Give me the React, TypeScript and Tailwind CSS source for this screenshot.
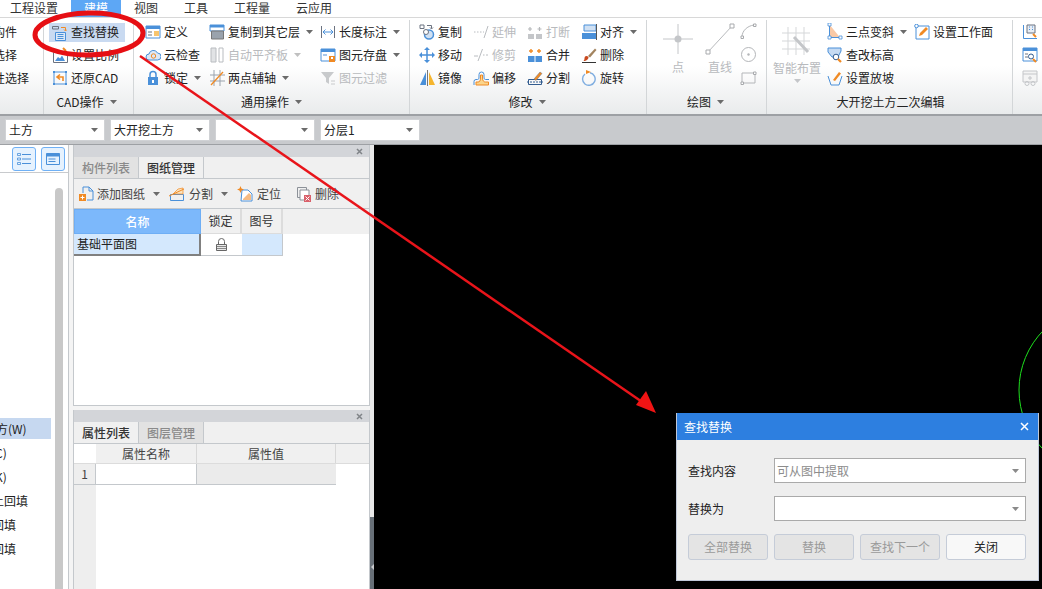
import React from "react";

const B = "#4a90d9";
const O = "#f08a24";
const G = "#b9bcc0";
const D = "#6b7280";

function S({ children, w = 16, h = 16 }: { children: React.ReactNode; w?: number; h?: number }) {
  return (
    <svg width={w} height={h} viewBox={`0 0 ${w} ${h}`} fill="none" className="shrink-0">
      {children}
    </svg>
  );
}

const I: Record<string, React.ReactNode> = {
  find: (
    <S>
      <path d="M1.500 1.500h6v2.500h-6z" stroke={D} />
      <path d="M10 2.500h4.500v3M13 4.500l1.500 1.500L16 4.500" stroke={O} />
      <path d="M4.500 7.500h10v8h-10z" fill="#dbe8f7" stroke={B} />
      <path d="M6.500 9.500h6M6.500 11.500h6M6.500 13.500h6" stroke={B} />
    </S>
  ),
  scale: (
    <S>
      <path d="M1.500 5.500h14v10h-14z" fill="#fff" stroke={D} />
      <path d="M3 14l3-4 2 1.500 2-3 3 5.500z" fill={B} />
      <path d="M11 1l3 3" stroke={O} strokeWidth="2" />
    </S>
  ),
  restore: (
    <S>
      <path d="M2 2h12v12H2z" stroke={B} />
      <path d="M1 1h2v2H1zM13 1h2v2h-2zM1 13h2v2H1zM13 13h2v2h-2z" fill={B} />
      <path d="M11 11V7H6M8 4.500L5 7l3 2.500" stroke={O} strokeWidth="1.600" />
    </S>
  ),
  def: (
    <S>
      <path d="M1 2h14v12H1z" fill="#fff" stroke={B} />
      <path d="M1 2h14v3H1z" fill={B} />
      <path d="M3 8h4M3 11h4" stroke={D} />
      <path d="M9 7h5v5H9z" fill="#f7c56f" />
    </S>
  ),
  cloud: (
    <S>
      <path d="M4 13a3 3 0 010-6 4.500 4.500 0 018.500-1A3.500 3.500 0 0112.500 13z" fill="#dce8f6" stroke={B} />
      <circle cx="8.500" cy="9" r="2.200" stroke={O} />
    </S>
  ),
  lock: (
    <S>
      <path d="M5 7V4.500a3 3 0 016 0V7" stroke={B} strokeWidth="1.500" />
      <path d="M3 7h10v8H3z" fill={B} />
      <path d="M7 10h2v3H7z" fill="#fff" />
    </S>
  ),
  copyLayer: (
    <S>
      <path d="M1 1h14v6H1z" fill="#fff" stroke={B} />
      <path d="M1 1h14v2.500H1z" fill={B} />
      <path d="M2.500 7h12v8h-12z" fill="#9aa3ad" stroke="#777" />
    </S>
  ),
  align: (
    <S>
      <path d="M2 1h5v14H2z" fill="#e1e3e5" stroke={G} />
      <path d="M10 1h4v14h-4z" fill="#fff" stroke={G} />
    </S>
  ),
  twoPoint: (
    <S>
      <path d="M1 5h15M1 11h15M5 0v16M11 0v16" stroke="#9aa3ad" />
      <path d="M2 15L14 2" stroke={O} strokeWidth="1.300" />
    </S>
  ),
  len: (
    <S>
      <path d="M1.500 2v12M14.500 2v12" stroke={D} />
      <path d="M3 8h10M5.500 5.500L3 8l2.500 2.500M10.500 5.500L13 8l-2.500 2.500" stroke={B} />
    </S>
  ),
  save: (
    <S>
      <path d="M1 2h14v12H1z" fill="#fff" stroke={B} />
      <path d="M1 2h14v3H1z" fill={B} />
      <path d="M3 7h4v2H3z" fill="#a9c8ea" />
      <path d="M9 9h6v6H9z" fill={O} />
      <path d="M11 10h2v2h-2z" fill="#fff" />
    </S>
  ),
  filter: (
    <S>
      <path d="M1 2h13L9 8v6l-3-2V8z" fill="#c8cacc" />
      <path d="M11 11h4M11 14h4" stroke="#c8cacc" />
    </S>
  ),
  copy: (
    <S>
      <path d="M1 1h4v3.500H1z" stroke={D} />
      <path d="M8 1.500h4.500v3M11 3.500l1.500 1.500L14 3.500" stroke={D} />
      <circle cx="10" cy="10.500" r="4.500" fill="#cfe0f3" stroke={B} strokeWidth="1.500" />
      <circle cx="7" cy="8" r="2.500" fill="#fff" stroke={D} />
    </S>
  ),
  move: (
    <S>
      <path d="M8 2v12M2 8h12" stroke={B} strokeWidth="1.500" />
      <path d="M8 0l3 3H5zM8 16l3-3H5zM0 8l3-3v6zM16 8l-3-3v6z" fill={B} />
    </S>
  ),
  mirror: (
    <S>
      <path d="M7 2v13H1z" fill={B} />
      <path d="M8.500 0v16" stroke="#777" />
      <path d="M10 2v13h6z" fill="#f5b52e" />
    </S>
  ),
  extend: (
    <S>
      <path d="M1 8h1.500M4 8h1.500M7 8h1.500" stroke={G} />
      <path d="M10 8h1M15 2l-4 12" stroke={G} />
    </S>
  ),
  trim: (
    <S>
      <path d="M1 9h4M10 8h1.500M13 8h2M9.500 2L5 14" stroke={G} />
    </S>
  ),
  offset: (
    <S>
      <path d="M1 15V11.500A2 2 0 013 9.500h1.500C5.500 9.500 6 9 6 7V4.500a2.500 2.500 0 015 0V7c0 2 .5 2.500 1.500 2.500H16" stroke={B} />
      <path d="M3 15h12.500V12H12.500C11 12 9.500 11 9.500 8V5H7.500v3c0 3-1 4-2.500 4H3z" fill="#fbd58c" stroke={O} />
    </S>
  ),
  break: (
    <S>
      <path d="M1 10h6v5H1zM9 10h6v5H9z" fill="#c4c6c9" />
      <path d="M3 3v4M1 5h4M12.500 3v4M10.500 5h4" stroke="#b5b7ba" strokeWidth="1.200" />
    </S>
  ),
  merge: (
    <S>
      <path d="M1 9h14v6H1z" fill={B} />
      <path d="M8 9v6" stroke="#fff" />
      <path d="M4 2v4M2 4h4M12 2v4M10 4h4" stroke={O} strokeWidth="1.400" />
    </S>
  ),
  split: (
    <S>
      <path d="M1.500 9.500h13v5h-13z" stroke="#335c8f" />
      <path d="M0 12h16" stroke="#335c8f" strokeDasharray="2 1" />
      <path d="M7 9l6-7 2 1.500L9 10.500z" fill={O} stroke={D} strokeWidth=".5" />
    </S>
  ),
  alignTop: (
    <S>
      <path d="M1 9h14v6H1z" fill={B} />
      <path d="M3 1h12v6H3z" fill="#cfe0f3" stroke={B} />
      <path d="M15.500 0v16" stroke="#555" />
    </S>
  ),
  del: (
    <S>
      <path d="M1 15.500h14" stroke="#333" />
      <path d="M7 9L14 1.500 15.500 3 9 10.500z" fill="#a3845f" />
      <path d="M4 9.500c2-1.500 4 .5 3.500 1.500C6.500 13.500 4 14 2.500 14c1.500-1 .5-3 1.500-4.500z" fill="#c9491f" />
    </S>
  ),
  rotate: (
    <S>
      <path d="M9 2.800a6.300 6.300 0 11-5 1.200" stroke="#80aee0" strokeWidth="1.400" />
      <path d="M5 0l5 2-5 2z" fill={O} />
    </S>
  ),
  slope: (
    <S h={17}>
      <path d="M2.500 1.500v13h10.500z" fill="#f9c9a6" />
      <path d="M2.500 2v12.500H13" stroke={B} />
      <path d="M1 0h3v3H1zM1 13h3v3H1zM12 13h3v3h-3z" fill="#fff" stroke={B} strokeWidth=".8" />
    </S>
  ),
  elev: (
    <S>
      <path d="M1 1h13v3l-3 6H5L1 5z" fill="#c6dbf3" stroke={B} />
      <circle cx="9" cy="10" r="2.800" fill="#fff" stroke="#335c8f" />
      <path d="M11 12l3 3" stroke={O} strokeWidth="2.200" />
    </S>
  ),
  slopeSet: (
    <S>
      <path d="M1 6l3 9h8l3-9" stroke={B} />
      <path d="M6 10l6-8 2 1.500-6 7.500z" fill={O} />
    </S>
  ),
  plane: (
    <S>
      <path d="M2 2h13v13H2z" fill="#fff" stroke={B} />
      <circle cx="2.500" cy="2" r="1.800" fill="#fff" stroke={B} />
      <path d="M5 12l1-3 6-6 2 2-6 6z" fill={O} />
    </S>
  ),
  r1: (
    <S>
      <path d="M1.500 1v13.500H15" stroke={B} />
      <path d="M5 1h8v8H5z" fill="#e8eef6" stroke={D} />
      <path d="M7 3h1M10 3h1M7 5.500h1M10 5.500h1" stroke={B} />
      <path d="M11 10l3 3" stroke={O} strokeWidth="2" />
    </S>
  ),
  r2: (
    <S>
      <path d="M1 1h14v13H1z" fill="#fff" stroke={B} />
      <path d="M1 1h14v3H1z" fill={B} />
      <circle cx="9" cy="9.500" r="2.500" stroke="#335c8f" />
      <path d="M3 7h3M3 10h3" stroke={D} />
      <path d="M11 12l3 3" stroke={O} strokeWidth="2" />
    </S>
  ),
  r3: (
    <S>
      <path d="M1 1h14v11H1z" fill="#f4f4f4" stroke="#c4c6c9" />
      <path d="M1 4h14M6 8h4M8 6v4" stroke="#c4c6c9" />
      <circle cx="5" cy="13.500" r="2" stroke="#c4c6c9" />
      <circle cx="11" cy="13.500" r="2" stroke="#c4c6c9" />
    </S>
  ),
  addDrawing: (
    <S>
      <path d="M5 1h6l4 4v9H9" stroke={B} />
      <path d="M11 1v4h4M5 1v6" stroke={B} />
      <path d="M1 8h7v7H1z" fill={O} />
      <path d="M4.500 9.500v4M2.500 11.500h4" stroke="#fff" />
    </S>
  ),
  splitD: (
    <S>
      <path d="M1.500 8.500h13v6h-13z" stroke={B} />
      <path d="M4 8l5-5 5-1v6z" fill="#fbe3bf" stroke={O} strokeWidth=".7" />
      <path d="M0 10l15-7" stroke={O} />
    </S>
  ),
  locate: (
    <S>
      <path d="M5 4h6l4 4v7H4z" fill="#fff" stroke={B} />
      <path d="M6 13l6-6 2 2v5H6z" fill="#f7bb83" />
      <path d="M3.500 0l1 2.500 2.500 1-2.500 1-1 2.500-1-2.500L0 3.500l2.500-1z" fill={O} />
    </S>
  ),
  remove: (
    <S>
      <path d="M1.500 1.500h9v10h-9z" stroke="#8c9198" />
      <path d="M4 4h9v10H4z" fill="#fff" stroke="#8c9198" />
      <path d="M8 9h7v7H8z" fill="#d9606a" />
      <path d="M9.500 10.500l4 4M13.500 10.500l-4 4" stroke="#fff" />
    </S>
  ),
};

function Caret({ c = "#6b6b6b" }: { c?: string }) {
  return (
    <svg width="7" height="4" viewBox="0 0 7 4" className="shrink-0">
      <path d="M0 0h7L3.500 4z" fill={c} />
    </svg>
  );
}

function Item({ icon, label, caret, off }: { icon?: string; label: string; caret?: boolean; off?: boolean }) {
  return (
    <div className={`flex h-[23px] items-center whitespace-nowrap ${off ? "text-[#b8babd]" : "text-[#222222]"}`}>
      {icon && <span className="mr-[3px] flex w-[16px] justify-center">{I[icon]}</span>}
      <span>{label}</span>
      {caret && (
        <span className="ml-[6px]">
          <Caret c={off ? "#c0c0c0" : "#6b6b6b"} />
        </span>
      )}
    </div>
  );
}

function Group({ width, label, caret, children, last, labelClass = "" }: { width: string; label?: string; caret?: boolean; children: React.ReactNode; last?: boolean; labelClass?: string }) {
  return (
    <div className={`relative flex h-full shrink-0 flex-col overflow-hidden ${width} ${last ? "" : "border-r border-[#d3d6d8]"}`}>
      <div className="flex h-[69px] shrink-0">{children}</div>
      <div className={`flex h-[26px] items-center justify-center gap-[6px] whitespace-nowrap text-[#222222] ${labelClass}`}>
        {label}
        {caret && <Caret />}
      </div>
    </div>
  );
}

function ToolSelect({ value }: { value: string }) {
  return (
    <div className="flex h-[22px] w-[100px] items-center justify-between border border-[#d0d2d5] bg-white pl-[3px] pr-[6px] text-[#222]">
      <span>{value}</span>
      <Caret />
    </div>
  );
}

function Tab({ label, active }: { label: string; active?: boolean }) {
  return (
    <div
      className={`flex h-[21px] w-[65px] items-center justify-center border-r border-[#c4c8cc] ${
        active ? "bg-[#f0f0f0] font-medium text-[#333]" : "bg-[#e2e2e2] font-medium text-[#8a8a8a]"
      }`}
    >
      {label}
    </div>
  );
}

function PanelHead() {
  return (
    <div className="flex h-[12px] shrink-0 items-center justify-end bg-[#d3d5d9] pr-[6px]">
      <svg width="7" height="7" viewBox="0 0 7 7">
        <path d="M1 1l5 5M6 1L1 6" stroke="#808488" strokeWidth="1.500" />
      </svg>
    </div>
  );
}

function DialogSelect({ value }: { value?: string }) {
  return (
    <div className="flex h-[25px] w-[252px] items-center justify-between border border-[#aaaaaa] bg-white pl-[2px] pr-[6px] text-[#8c8c8c]">
      <span>{value}</span>
      <Caret c="#8a8a8a" />
    </div>
  );
}

function DialogBtn({ label, off }: { label: string; off?: boolean }) {
  return (
    <div
      className={`flex h-[26px] w-[80px] items-center justify-center rounded-[3px] border border-[#c5ccd8] ${
        off ? "bg-[#e4e4e4] text-[#9a9a9a]" : "bg-[#f8f8f8] text-[#222]"
      }`}
    >
      {label}
    </div>
  );
}

function TreeRow({ label, sel, shift }: { label: string; sel?: boolean; shift: string }) {
  return (
    <div className={`mb-[3px] flex h-[21px] w-[51px] items-center overflow-hidden whitespace-nowrap text-[#222] ${sel ? "bg-[#c6d8f0]" : ""}`}>
      <span className={shift}>{label}</span>
    </div>
  );
}

export default function App() {
  return (
    <div className="relative flex h-[589px] w-[1042px] flex-col overflow-hidden bg-white font-['Noto_Sans_CJK_SC',sans-serif] text-[12px] leading-none">
      {/* menu tabs */}
      <div className="flex h-[18px] shrink-0 items-center border-b border-[#d8d8d8] bg-white pb-[1px] pl-[10px] text-[#333]">
        <span className="w-[61px]">工程设置</span>
        <span className="flex h-[17px] w-[50px] items-center justify-center bg-[#5da7f5] text-white">建模</span>
        <span className="ml-[13px] w-[50px]">视图</span>
        <span className="w-[50px]">工具</span>
        <span className="w-[62px]">工程量</span>
        <span>云应用</span>
      </div>

      {/* ribbon */}
      <div className="flex h-[98px] shrink-0 border-b-2 border-[#9da0a4] bg-gradient-to-b from-white from-50% to-[#e9ebec] pt-[2px]">
        <Group width="w-[44px]">
          <div className="-ml-[7px]">
            <Item label="构件" />
            <Item label="选择" />
            <Item label="性选择" />
          </div>
        </Group>
        <Group width="w-[90px]" label="CAD操作" caret labelClass="pr-[4px]">
          <div className="ml-[5px]">
            <div className="flex h-[23px] items-start pt-[3px]">
              <div className="flex h-[19px] w-[76px] items-center bg-[#c9daf1] pl-[2px]">
                <span className="mr-[4px] flex w-[16px] justify-center">{I.find}</span>
                <span className="-mt-[2px] text-[#222]">查找替换</span>
              </div>
            </div>
            <div className="pl-[3px]">
              <Item icon="scale" label="设置比例" />
              <Item icon="restore" label="还原CAD" />
            </div>
          </div>
        </Group>
        <Group width="w-[276px]" label="通用操作" caret>
          <div className="ml-[11px] w-[64px]">
            <Item icon="def" label="定义" />
            <Item icon="cloud" label="云检查" />
            <Item icon="lock" label="锁定" caret />
          </div>
          <div className="w-[111px]">
            <Item icon="copyLayer" label="复制到其它层" caret />
            <Item icon="align" label="自动平齐板" caret off />
            <Item icon="twoPoint" label="两点辅轴" caret />
          </div>
          <div>
            <Item icon="len" label="长度标注" caret />
            <Item icon="save" label="图元存盘" caret />
            <Item icon="filter" label="图元过滤" off />
          </div>
        </Group>
        <Group width="w-[237px]" label="修改" caret labelClass="pr-[2px]">
          <div className="ml-[9px] w-[54px]">
            <Item icon="copy" label="复制" />
            <Item icon="move" label="移动" />
            <Item icon="mirror" label="镜像" />
          </div>
          <div className="w-[54px]">
            <Item icon="extend" label="延伸" off />
            <Item icon="trim" label="修剪" off />
            <Item icon="offset" label="偏移" />
          </div>
          <div className="w-[54px]">
            <Item icon="break" label="打断" off />
            <Item icon="merge" label="合并" />
            <Item icon="split" label="分割" />
          </div>
          <div>
            <Item icon="alignTop" label="对齐" caret />
            <Item icon="del" label="删除" />
            <Item icon="rotate" label="旋转" />
          </div>
        </Group>
        <Group width="w-[120px]" label="绘图" caret labelClass="pr-[2px]">
          <div className="ml-[10px] flex w-[42px] flex-col items-center pt-[3px] text-[#b8babd]">
            <svg width="30" height="32" viewBox="0 0 30 32">
              <path d="M15 1v12M15 19v12M0 16h12M18 16h12" stroke="#c4c6c9" />
              <circle cx="15" cy="16" r="3.500" fill="#c4c6c9" />
            </svg>
            <span className="mt-[6px]">点</span>
          </div>
          <div className="flex w-[42px] flex-col items-center pt-[3px] text-[#b8babd]">
            <svg width="30" height="32" viewBox="0 0 30 32">
              <path d="M3 29L27 3" stroke="#b8babd" />
              <path d="M1 27h4v4H1zM25 1h4v4h-4z" fill="#fff" stroke="#a8aaad" />
            </svg>
            <span className="mt-[6px]">直线</span>
          </div>
          <div className="-ml-[3px] flex w-[20px] flex-col items-center">
            {[
              <g key="a">
                <path d="M2 14C2 8 7 3 14 2" stroke="#b4b6b9" />
                <path d="M1 13h2.500v2.500H1zM13.500 1H16v2.500h-2.500z" stroke="#a8aaad" fill="#fff" />
              </g>,
              <g key="b">
                <circle cx="8.500" cy="8.500" r="7" stroke="#b4b6b9" />
                <circle cx="8.500" cy="8.500" r="1.200" fill="#b4b6b9" />
              </g>,
              <g key="c">
                <path d="M2 4h13v10H2z" stroke="#b4b6b9" />
                <path d="M1 13h2.500v2.500H1zM13.500 3H16v2.500h-2.500z" stroke="#a8aaad" fill="#fff" />
              </g>,
            ].map((p, i) => (
              <div key={i} className="flex h-[23px] items-center">
                <svg width="17" height="17" viewBox="0 0 17 17" fill="none">{p}</svg>
              </div>
            ))}
          </div>
        </Group>
        <Group width="w-[246px]" label="大开挖土方二次编辑" labelClass="pl-[2px]">
          <div className="ml-[6px] flex w-[54px] flex-col items-start pt-[7px] text-[#b8babd]">
            <div className="ml-[9px]">
              <svg width="30" height="30" viewBox="0 0 30 30" fill="none">
                <path d="M0 6h28M0 14h28M0 22h28M6 0v28M14 0v28M22 0v28" stroke="#d5d7d9" />
                <path d="M12 10l14 15" stroke="#c4c6c9" strokeWidth="3" />
              </svg>
            </div>
            <span className="mt-[5px]">智能布置</span>
            <span className="ml-[21px] mt-[5px]"><Caret c="#c4c6c9" /></span>
          </div>
          <div className="w-[87px]">
            <Item icon="slope" label="三点变斜" caret />
            <Item icon="elev" label="查改标高" />
            <Item icon="slopeSet" label="设置放坡" />
          </div>
          <div>
            <Item icon="plane" label="设置工作面" />
          </div>
        </Group>
        <Group width="w-[30px]" last>
          <div className="ml-[9px] w-[40px]">
            <Item icon="r1" label="" />
            <Item icon="r2" label="" />
            <Item icon="r3" label="" />
          </div>
        </Group>
      </div>

      {/* selector bar */}
      <div className="flex h-[29px] shrink-0 items-center gap-[5px] border-b border-[#9da0a4] bg-[#c8cacd] pb-[1px] pl-[5px]">
        <ToolSelect value="土方" />
        <ToolSelect value="大开挖土方" />
        <ToolSelect value="" />
        <ToolSelect value="分层1" />
      </div>

      {/* main */}
      <div className="flex min-h-0 flex-1">
        {/* tree */}
        <div className="flex w-[69px] shrink-0 flex-col border-r border-[#c4c8cc] bg-white">
          <div className="flex h-[28px] shrink-0 items-center gap-[5px] border-b border-[#c8cacd] pl-[12px]">
            <div className="flex h-[24px] w-[24px] items-center justify-center rounded-[3px] border border-[#6fb0f5] bg-[#e6f2fe]">
              <svg width="14" height="12" viewBox="0 0 14 12" fill="none">
                <path d="M.500.500h3v2H.500zM.500 5h3v2H.500zM.500 9.500h3v2H.500z" stroke="#4a90d9" strokeWidth=".8" />
                <path d="M5 1.500h9M5 6h9M5 10.500h9" stroke="#4a90d9" />
              </svg>
            </div>
            <div className="flex h-[24px] w-[24px] items-center justify-center rounded-[3px] border border-[#6fb0f5] bg-[#e6f2fe]">
              <svg width="14" height="12" viewBox="0 0 14 12" fill="none">
                <path d="M.500.500h13v11H.500z" stroke="#4a90d9" />
                <path d="M.500.500h13v3H.500z" fill="#4a90d9" />
                <path d="M2.500 6h7M2.500 8.500h7" stroke="#4a90d9" />
              </svg>
            </div>
          </div>
          <div className="relative min-h-0 flex-1">
            <div className="absolute bottom-0 left-[55px] top-[15px] w-[8px] rounded-t-[4px] bg-[#c8c8c8]" />
            <div className="pt-[245px]">
              <TreeRow label="方(W)" sel shift="-ml-[4px]" />
              <TreeRow label="C)" shift="-ml-[5px]" />
              <TreeRow label="K)" shift="-ml-[5px]" />
              <TreeRow label="土回填" shift="-ml-[8px]" />
              <TreeRow label="回填" shift="-ml-[8px]" />
              <TreeRow label="回填" shift="-ml-[8px]" />
            </div>
          </div>
        </div>

        {/* middle */}
        <div className="flex w-[301px] shrink-0 flex-col gap-[4px] bg-[#f4f4f4] pl-[4px]">
          <div className="flex h-[261px] shrink-0 flex-col border-x border-b border-[#c4c8cc] bg-white">
            <PanelHead />
            <div className="flex h-[22px] shrink-0 border-b border-[#c4c8cc] bg-[#f0f0f0]">
              <Tab label="构件列表" />
              <Tab label="图纸管理" active />
            </div>
            <div className="flex h-[30px] shrink-0 items-center border-b border-[#c4c8cc] bg-[#f0f0f0] pl-[4px] text-[#444]">
              <span className="mr-[3px]">{I.addDrawing}</span>
              添加图纸
              <span className="ml-[8px] mr-[9px]"><Caret /></span>
              <span className="mr-[4px]">{I.splitD}</span>
              分割
              <span className="ml-[8px] mr-[9px]"><Caret /></span>
              <span className="mr-[4px]">{I.locate}</span>
              定位
              <span className="ml-[15px] mr-[3px]">{I.remove}</span>
              删除
            </div>
            <div className="flex h-[25px] shrink-0 bg-[#f0f0f0]">
              <div className="flex w-[127px] items-center justify-center border border-[#6eaef5] bg-[#7cb8fb] font-medium text-white">名称</div>
              <div className="flex w-[41px] items-center justify-center border-b border-r-2 border-[#dcdcdc] text-[#333]">锁定</div>
              <div className="flex w-[41px] items-center justify-center border-b border-r-2 border-[#dcdcdc] text-[#333]">图号</div>
            </div>
            <div className="flex h-[22px] shrink-0">
              <div className="flex w-[127px] items-center border-b-2 border-r-2 border-[#808080] bg-[#d4e8fd] pl-[3px] text-[#222]">基础平面图</div>
              <div className="flex w-[41px] items-center justify-center border-b border-[#c4c8cc]">
                <svg width="11" height="13" viewBox="0 0 11 13" fill="none">
                  <path d="M2.500 6V3.500a3 3 0 016 0V6" stroke="#666" />
                  <path d="M.5 6.500h10v6H.5z" fill="#e8e8e8" stroke="#666" />
                  <path d="M1 8.500h9M1 10.500h9" stroke="#888" />
                </svg>
              </div>
              <div className="w-[41px] border-b border-r border-[#c4c8cc] bg-[#d4e8fd]" />
            </div>
          </div>
          <div className="flex min-h-0 flex-1 flex-col border-x border-[#c4c8cc] bg-white">
            <PanelHead />
            <div className="flex h-[22px] shrink-0 border-b border-[#c4c8cc] bg-[#f0f0f0]">
              <Tab label="属性列表" active />
              <Tab label="图层管理" />
            </div>
            <div className="flex h-[20px] shrink-0 border-b border-[#dcdcdc] bg-[#f0f0f0]">
              <div className="w-[22px] bg-white" />
              <div className="flex w-[101px] items-center justify-center border-r border-[#d8d8d8] text-[#444]">属性名称</div>
              <div className="flex w-[139px] items-center justify-center border-r border-[#d8d8d8] text-[#444]">属性值</div>
            </div>
            <div className="flex h-[21px] shrink-0">
              <div className="flex w-[22px] items-center justify-center border-b border-r border-[#c4c8cc] bg-[#eeeeee] text-[#444]">1</div>
              <div className="w-[101px] border-b border-r border-[#c4c8cc] bg-white" />
              <div className="w-[139px] border-b border-[#c4c8cc] bg-[#ebebeb]" />
            </div>
            <div className="min-h-0 w-[22px] flex-1 bg-[#eeeeee]" />
          </div>
        </div>

        {/* splitter */}
        <div className="flex w-[4px] shrink-0 flex-col justify-end bg-[#e8e8e8]">
          <div className="flex h-[72px] items-center justify-center bg-[#687078] pt-[28px]">
            <svg width="3" height="6" viewBox="0 0 3 6"><path d="M3 0v6L0 3z" fill="#c8cacd" /></svg>
          </div>
        </div>

        {/* canvas */}
        <div className="relative min-w-0 flex-1 overflow-hidden bg-black">
          <svg width="668" height="444" viewBox="0 0 668 444" fill="none">
            <circle cx="730" cy="245" r="85" stroke="#1ee01e" />
          </svg>
        </div>
      </div>

      {/* annotation overlay */}
      <svg className="pointer-events-none absolute left-0 top-0" width="1042" height="589" viewBox="0 0 1042 589" fill="none">
        <ellipse cx="89" cy="34" rx="54" ry="21" stroke="#e60f14" strokeWidth="5" transform="rotate(-1 89 34)" />
        <path d="M140 56L648 406" stroke="#e8141a" strokeWidth="2.500" />
        <path d="M656 413L636 405L646 391Z" fill="#f01414" />
      </svg>

      {/* dialog */}
      <div className="absolute left-[676px] top-[413px] flex h-[168px] w-[363px] flex-col border border-t-0 border-[#c0c8d8] bg-[#eeeeee]">
        <div className="flex h-[27px] shrink-0 items-center justify-between bg-[#2d7fe0] pl-[7px] pr-[9px] text-white">
          <span>查找替换</span>
          <svg width="9" height="9" viewBox="0 0 9 9"><path d="M1 1l7 7M8 1L1 8" stroke="#fff" strokeWidth="1.500" /></svg>
        </div>
        <div className="flex flex-col px-[11px] pt-[18px]">
          <div className="flex items-center">
            <span className="w-[86px] text-[#222]">查找内容</span>
            <DialogSelect value="可从图中提取" />
          </div>
          <div className="mt-[13px] flex items-center">
            <span className="w-[86px] text-[#222]">替换为</span>
            <DialogSelect />
          </div>
          <div className="mt-[13px] flex gap-[6px]">
            <DialogBtn label="全部替换" off />
            <DialogBtn label="替换" off />
            <DialogBtn label="查找下一个" off />
            <DialogBtn label="关闭" />
          </div>
        </div>
      </div>
    </div>
  );
}
